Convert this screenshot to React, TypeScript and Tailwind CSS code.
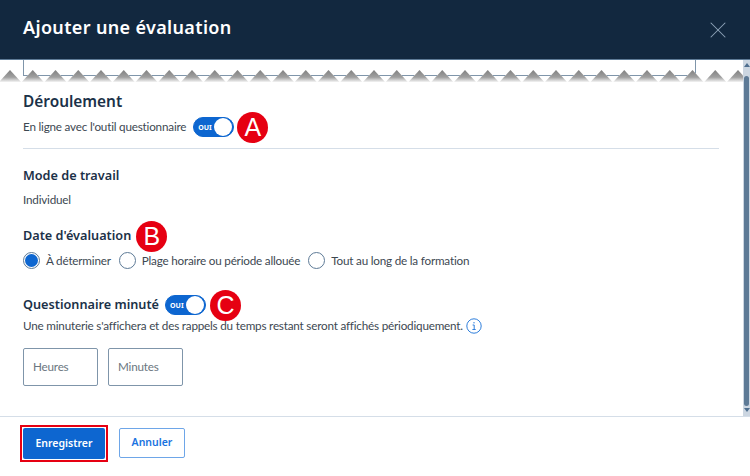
import { X } from "lucide-react";

const TEETH = Array.from({ length: 34 }, (_, i) => 10 + i * 22.75);

function Toggle() {
  return (
    <div className="w-[41px] h-[20px] rounded-full bg-[#0d66d0] border border-[#0d66d0] flex items-center justify-between pl-[4px] pr-[1px] shrink-0">
      <span className="text-[7px] font-bold text-white leading-none tracking-normal font-['Noto_Sans',sans-serif]">OUI</span>
      <span className="w-[18px] h-[18px] rounded-full bg-white" />
    </div>
  );
}

function Badge({ letter }: { letter: string }) {
  return (
    <div className="w-[31px] h-[31px] -my-[6px] rounded-full bg-[#e60012] text-white flex items-center justify-center text-[25px] leading-none tracking-normal font-['Liberation_Sans',sans-serif] shrink-0">
      {letter}
    </div>
  );
}

function Radio({ label, checked }: { label: string; checked?: boolean }) {
  return (
    <label className="flex items-center gap-[6px]">
      <span className="w-[17px] h-[17px] rounded-full border border-[#5d7a96] flex items-center justify-center shrink-0">
        {checked && <span className="w-[13px] h-[13px] rounded-full bg-[#0d66d0]" />}
      </span>
      <span>{label}</span>
    </label>
  );
}

function TornEdge() {
  return (
    <svg className="absolute left-0 top-[10px] pointer-events-none" width="750" height="14" viewBox="0 0 750 14">
      <defs>
        <linearGradient id="tooth" x1="0" y1="0" x2="0" y2="1">
          <stop offset="0" stopColor="#808080" />
          <stop offset="0.6" stopColor="#a0a0a0" />
          <stop offset="1" stopColor="#f4f4f4" />
        </linearGradient>
      </defs>
      {TEETH.map((x) => (
        <g key={x}>
          <polygon points={`${x},0 ${x + 11},12 ${x + 11},14 ${x - 11},14 ${x - 11},12`} fill="white" />
          <polygon points={`${x},0 ${x + 11},12 ${x - 11},12`} fill="url(#tooth)" />
        </g>
      ))}
    </svg>
  );
}

export default function App() {
  return (
    <div className="w-[750px] h-[476px] bg-white flex flex-col overflow-hidden font-['Lato',sans-serif] text-[11.7px] tracking-[-0.2px] text-[#3d4852]">
      {/* Header */}
      <div className="h-[60px] shrink-0 bg-[#12283f] border-b border-[#5d7a96] flex items-center justify-between pl-[23px] pr-[18px]">
        <h1 className="text-[18px] font-semibold text-white tracking-[0.35px] -mt-[4px] font-['Noto_Sans',sans-serif]">Ajouter une évaluation</h1>
        <X className="w-[28px] h-[28px] text-[#8ea3b8]" strokeWidth={0.9} />
      </div>

      {/* Body */}
      <div className="h-[356px] shrink-0 flex">
        <div className="relative flex-1 px-[23px] overflow-hidden">
          <div className="h-[16px] w-[673px] border-x border-b border-[#7f95aa]" />
          <TornEdge />

          <h2 className="mt-[16px] text-[15.4px] leading-[20px] font-semibold tracking-normal text-[#1b3148] font-['Noto_Sans',sans-serif]">Déroulement</h2>
          <div className="mt-[5px] flex items-center h-[20px]">
            <span className="mr-[7px]">En ligne avec l'outil questionnaire</span>
            <Toggle />
            <div className="ml-[3px]">
              <Badge letter="A" />
            </div>
          </div>
          <div className="mt-[11px] w-[696px] border-t border-[#d5dee8]" />

          <h3 className="mt-[17px] text-[12.7px] leading-[18px] font-semibold tracking-normal text-[#1b3148] font-['Noto_Sans',sans-serif]">Mode de travail</h3>
          <p className="mt-[6px] leading-[18px]">Individuel</p>

          <div className="mt-[19px] flex items-center gap-[5px] h-[18px]">
            <h3 className="text-[12.7px] font-semibold tracking-normal text-[#1b3148] font-['Noto_Sans',sans-serif]">Date d'évaluation</h3>
            <Badge letter="B" />
          </div>
          <div className="mt-[7px] flex items-center gap-[8px] h-[18px]">
            <Radio label="À déterminer" checked />
            <Radio label="Plage horaire ou période allouée" />
            <Radio label="Tout au long de la formation" />
          </div>

          <div className="mt-[25px] flex items-center h-[20px]">
            <h3 className="mr-[6px] text-[12.7px] font-semibold tracking-normal text-[#1b3148] font-['Noto_Sans',sans-serif]">Questionnaire minuté</h3>
            <Toggle />
            <div className="ml-[4px]">
              <Badge letter="C" />
            </div>
          </div>
          <div className="mt-[1px] flex items-center gap-[3px] h-[20px]">
            <span>Une minuterie s'affichera et des rappels du temps restant seront affichés périodiquement.</span>
            <svg className="w-[16px] h-[16px] shrink-0" viewBox="0 0 16 16" fill="none" stroke="#2f7fdc">
              <circle cx="8" cy="8" r="7.2" strokeWidth="1" />
              <path d="M6.6 7h1.6v4.4M6.4 11.5h3.3" strokeWidth="1" />
              <circle cx="8" cy="4.7" r="0.7" fill="#2f7fdc" stroke="none" />
            </svg>
          </div>

          <div className="mt-[12px] flex gap-[10px]">
            <div className="w-[75px] h-[38px] rounded-[2px] border border-[#7f95aa] flex items-center pl-[9px] pb-[1px] text-[#6b7680]">Heures</div>
            <div className="w-[75px] h-[38px] rounded-[2px] border border-[#7f95aa] flex items-center pl-[9px] pb-[1px] text-[#6b7680]">Minutes</div>
          </div>
        </div>

        {/* Scrollbar */}
        <div className="w-[7px] shrink-0 bg-[#ccd6e1] flex flex-col items-center">
          <div className="mt-[3px] w-0 h-0 border-x-[3px] border-x-transparent border-b-[4px] border-b-[#4f6f8f]" />
          <div className="mt-[9px] w-[5px] h-[330px] rounded-full bg-[#5d7a96]" />
          <div className="mt-[2px] w-0 h-0 border-x-[3px] border-x-transparent border-t-[4px] border-t-[#4f6f8f]" />
        </div>
      </div>

      {/* Footer */}
      <div className="border-t border-[#d5dee8] flex items-start pl-[20px] pt-[8px] gap-[11px]">
        <div className="border-[2px] border-[#e60012] p-[1px]">
          <button className="w-[82px] h-[31px] rounded-[2px] bg-[#0d66d0] text-white text-[10.5px] font-semibold tracking-normal font-['Noto_Sans',sans-serif]">Enregistrer</button>
        </div>
        <button className="mt-[3px] w-[66px] h-[30px] rounded-[2px] border border-[#6ea6e8] text-[#1a73e0] text-[10.5px] font-semibold tracking-normal font-['Noto_Sans',sans-serif]">Annuler</button>
      </div>
    </div>
  );
}
